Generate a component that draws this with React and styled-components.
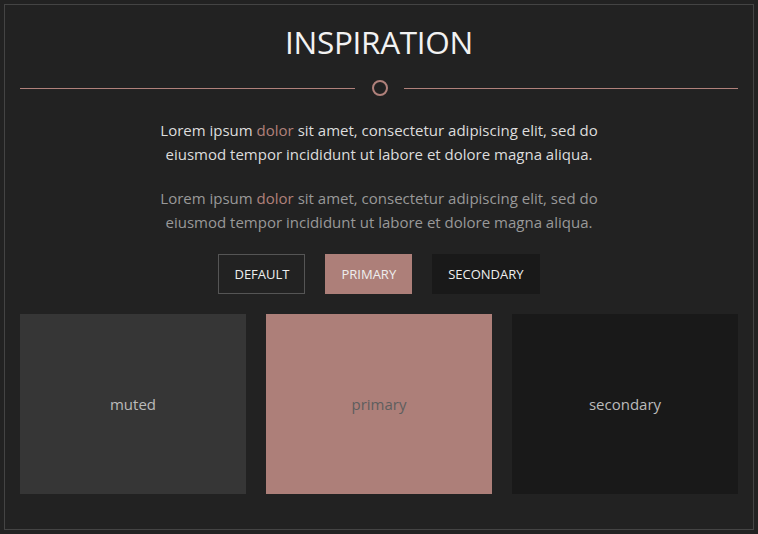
import React from 'react';
import styled, { createGlobalStyle } from 'styled-components';

const GlobalStyle = createGlobalStyle`
  html, body {
    margin: 0;
    padding: 0;
    background: #222222;
  }
  body {
    padding: 4px;
    font-family: "Open Sans", "Noto Sans", sans-serif;
  }
`;

const Frame = styled.div`
  border: 1px solid #444444;
  background: #222222;
  padding: 15px 15px 35px;
  height: 526px;
  box-sizing: border-box;
`;

const Title = styled.h1`
  margin: 0;
  text-align: center;
  font-size: 31.5px;
  font-weight: 400;
  line-height: 44px;
  color: #f2f2f2;
  letter-spacing: -0.3px;
`;

const Divider = styled.div`
  display: flex;
  align-items: center;
  margin-top: 16px;
  height: 16px;
`;

const Line = styled.div`
  flex: 1;
  height: 1px;
  background: #b0817b;
`;

const Ring = styled.div`
  width: 16px;
  height: 16px;
  box-sizing: border-box;
  border: 2px solid #b0817b;
  border-radius: 50%;
  margin: 0 16px 0 17px;
`;

const Text = styled.p`
  margin: ${(p) => p.$top}px auto 0;
  max-width: 470px;
  text-align: center;
  font-size: 15px;
  line-height: 24px;
  color: ${(p) => (p.$muted ? '#999999' : '#dddddd')};
`;

const Accent = styled.span`
  color: #b0817b;
`;

const Buttons = styled.div`
  display: flex;
  justify-content: center;
  gap: 20px;
  margin-top: 20px;
`;

const Button = styled.button`
  height: 40px;
  padding: 0 15px;
  box-sizing: border-box;
  font-family: inherit;
  font-size: 13px;
  text-transform: uppercase;
  color: #eeeeee;
  cursor: pointer;
  border: 1px solid ${(p) => (p.$variant === 'default' ? '#555555' : 'transparent')};
  background: ${(p) =>
    p.$variant === 'primary' ? '#ad7f79' : p.$variant === 'secondary' ? '#191919' : 'transparent'};
`;

const Grid = styled.div`
  display: grid;
  grid-template-columns: repeat(3, 1fr);
  gap: 20px;
  margin-top: 20px;
`;

const Card = styled.div`
  height: 180px;
  display: flex;
  align-items: center;
  justify-content: center;
  font-size: 15px;
  background: ${(p) => p.$bg};
  color: ${(p) => p.$fg};
`;

const swatches = [
  { name: 'muted', bg: '#363636', fg: '#bbbbbb' },
  { name: 'primary', bg: '#ad7f79', fg: '#5e5e5e' },
  { name: 'secondary', bg: '#191919', fg: '#bbbbbb' },
];

const Para = () => (
  <>
    Lorem ipsum <Accent>dolor</Accent> sit amet, consectetur adipiscing elit, sed do eiusmod tempor
    incididunt ut labore et dolore magna aliqua.
  </>
);

export default function App() {
  return (
    <>
      <GlobalStyle />
      <Frame>
        <Title>INSPIRATION</Title>
        <Divider>
          <Line />
          <Ring />
          <Line />
        </Divider>
        <Text $top={22}>
          <Para />
        </Text>
        <Text $top={20} $muted>
          <Para />
        </Text>
        <Buttons>
          <Button $variant="default">Default</Button>
          <Button $variant="primary">Primary</Button>
          <Button $variant="secondary">Secondary</Button>
        </Buttons>
        <Grid>
          {swatches.map((s) => (
            <Card key={s.name} $bg={s.bg} $fg={s.fg}>
              {s.name}
            </Card>
          ))}
        </Grid>
      </Frame>
    </>
  );
}
